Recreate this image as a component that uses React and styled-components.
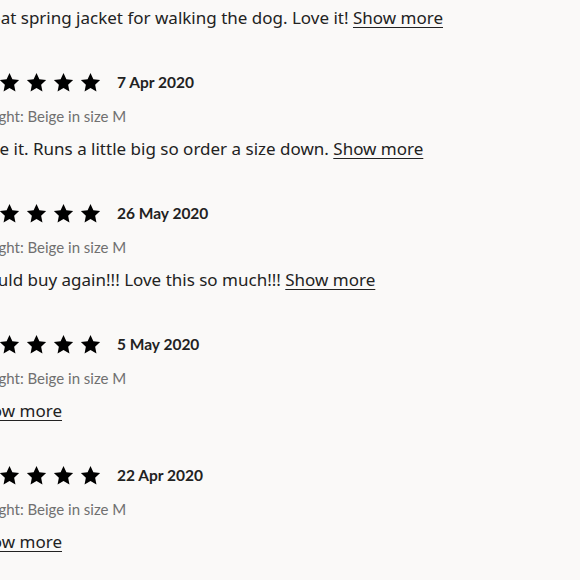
import React from 'react';
import styled, { createGlobalStyle } from 'styled-components';

const GlobalStyle = createGlobalStyle`
  html, body {
    margin: 0;
    padding: 0;
    background: #faf9f8;
    overflow: hidden;
  }
  body {
    font-family: Lato, "Noto Sans", sans-serif;
    color: #222222;
  }
`;

const ReviewList = styled.ul`
  list-style: none;
  margin: -60px 0 0 -28px;
  padding: 0;
  display: flex;
  flex-direction: column;
  gap: 41px;
`;

const ReviewItem = styled.li`
  display: flex;
  flex-direction: column;
`;

const RatingRow = styled.div`
  display: flex;
  align-items: center;
  height: 22px;
`;

const Stars = styled.div`
  display: flex;
  gap: 6px;
  margin-right: 16px;
`;

const DateText = styled.span`
  font-size: 15.5px;
  font-weight: 700;
  color: #222222;
`;

const Bought = styled.div`
  margin-top: 13px;
  font-size: 15px;
  line-height: 20px;
  color: #707070;
`;

const Body = styled.p`
  margin: 11px 0 0;
  font-family: "Noto Sans", sans-serif;
  font-size: 17px;
  line-height: 24px;
  color: #222222;
  white-space: nowrap;
`;

const ShowMore = styled.a`
  color: #222222;
  text-decoration: underline;
  text-underline-offset: 3px;
  cursor: pointer;
`;

function Star() {
  return (
    <svg width="21" height="21" viewBox="0 0 24 24">
      <path
        d="M12 1.2l3.3 7.1 7.7.9-5.7 5.3 1.5 7.7L12 18.4l-6.8 3.8 1.5-7.7L1 9.2l7.7-.9z"
        fill="#000"
      />
    </svg>
  );
}

const reviews = [
  { date: '14 Apr 2020', text: 'Great spring jacket for walking the dog. Love it!' },
  { date: '7 Apr 2020', text: 'Love it. Runs a little big so order a size down.' },
  { date: '26 May 2020', text: 'Would buy again!!! Love this so much!!!' },
  { date: '5 May 2020', text: '' },
  { date: '22 Apr 2020', text: '' },
];

export default function App() {
  return (
    <>
      <GlobalStyle />
      <ReviewList>
        {reviews.map((r, i) => (
          <ReviewItem key={i}>
            <RatingRow>
              <Stars>
                {[0, 1, 2, 3, 4].map((s) => <Star key={s} />)}
              </Stars>
              <DateText>{r.date}</DateText>
            </RatingRow>
            <Bought>Bought: Beige in size M</Bought>
            <Body>
              {r.text ? r.text + ' ' : ''}
              <ShowMore>Show more</ShowMore>
            </Body>
          </ReviewItem>
        ))}
      </ReviewList>
    </>
  );
}
